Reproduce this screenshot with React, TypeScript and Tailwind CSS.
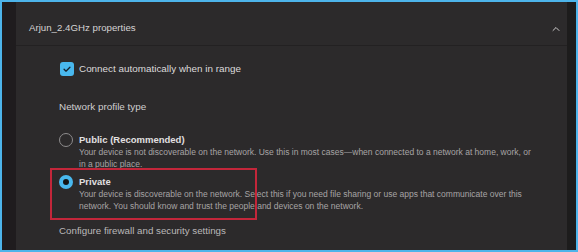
import { ChevronUp } from "lucide-react";

const font = { fontFamily: '"Liberation Sans", Arial, sans-serif' };

function RadioOption({
  checked,
  title,
  lines,
}: {
  checked?: boolean;
  title: string;
  lines: string[];
}) {
  return (
    <div className="flex items-start gap-[6px]">
      {checked ? (
        <span className="flex h-[14px] w-[14px] shrink-0 items-center justify-center rounded-full bg-[#49b8ee]">
          <span className="h-[6px] w-[6px] rounded-full bg-[#141414]" />
        </span>
      ) : (
        <span className="h-[14px] w-[14px] shrink-0 rounded-full border border-[#8e8c8d]" />
      )}
      <div className="flex flex-col">
        <p className="text-[9.5px] font-bold leading-[13px] text-[#e2e0e1]">{title}</p>
        {lines.map((line) => (
          <p key={line} className="whitespace-nowrap text-[8.5px] leading-[12px] text-[#a7a4a5]">
            {line}
          </p>
        ))}
      </div>
    </div>
  );
}

export default function App() {
  return (
    <div style={font} className="flex h-[252px] w-[578px] border-2 border-[#4db4ea] bg-[#1f1d1e]">
      <div className="w-[14px] bg-[#1f1c1e]" />
      <div className="flex flex-1 flex-col bg-[#2c2a2b]">
        <div className="flex h-[44px] items-center justify-between border-b border-[#232122] pl-[13px] pr-[5px] pt-[10px]">
          <span className="text-[9.7px] text-[#d4d2d3]">Arjun_2.4GHz properties</span>
          <ChevronUp size={12} strokeWidth={2} className="text-[#cfcdce]" />
        </div>
        <div className="flex flex-col pl-[43px] pt-[16px]">
          <div className="flex items-center gap-[5px]">
            <span className="ml-[1px] flex h-[14px] w-[14px] items-center justify-center rounded-[3px] bg-[#49b8ee]">
              <svg viewBox="0 0 12 12" className="h-[10px] w-[10px]" fill="none" stroke="#162430" strokeWidth="1.6">
                <path d="M2.5 6.3l2.3 2.3L9.5 3.8" strokeLinecap="round" strokeLinejoin="round" />
              </svg>
            </span>
            <span className="text-[9.9px] text-[#dcdadb]">Connect automatically when in range</span>
          </div>
          <p className="mt-[23px] text-[9.9px] leading-[14px] text-[#d0cecf]">Network profile type</p>
          <div className="mt-[19px]">
            <RadioOption
              title="Public (Recommended)"
              lines={[
                "Your device is not discoverable on the network. Use this in most cases—when connected to a network at home, work, or",
                "in a public place.",
              ]}
            />
          </div>
          <div className="relative mt-[5px]">
            <div className="pointer-events-none absolute left-[-9px] top-[-7px] h-[52px] w-[207px] border-2 border-[#c3263a]" />
            <RadioOption
              checked
              title="Private"
              lines={[
                "Your device is discoverable on the network. Select this if you need file sharing or use apps that communicate over this",
                "network. You should know and trust the people and devices on the network.",
              ]}
            />
          </div>
          <p className="mt-[12px] text-[9.75px] leading-[14px] text-[#bab8b9]">Configure firewall and security settings</p>
        </div>
      </div>
      <div className="w-[9px] bg-[#1d1c1c]" />
    </div>
  );
}
